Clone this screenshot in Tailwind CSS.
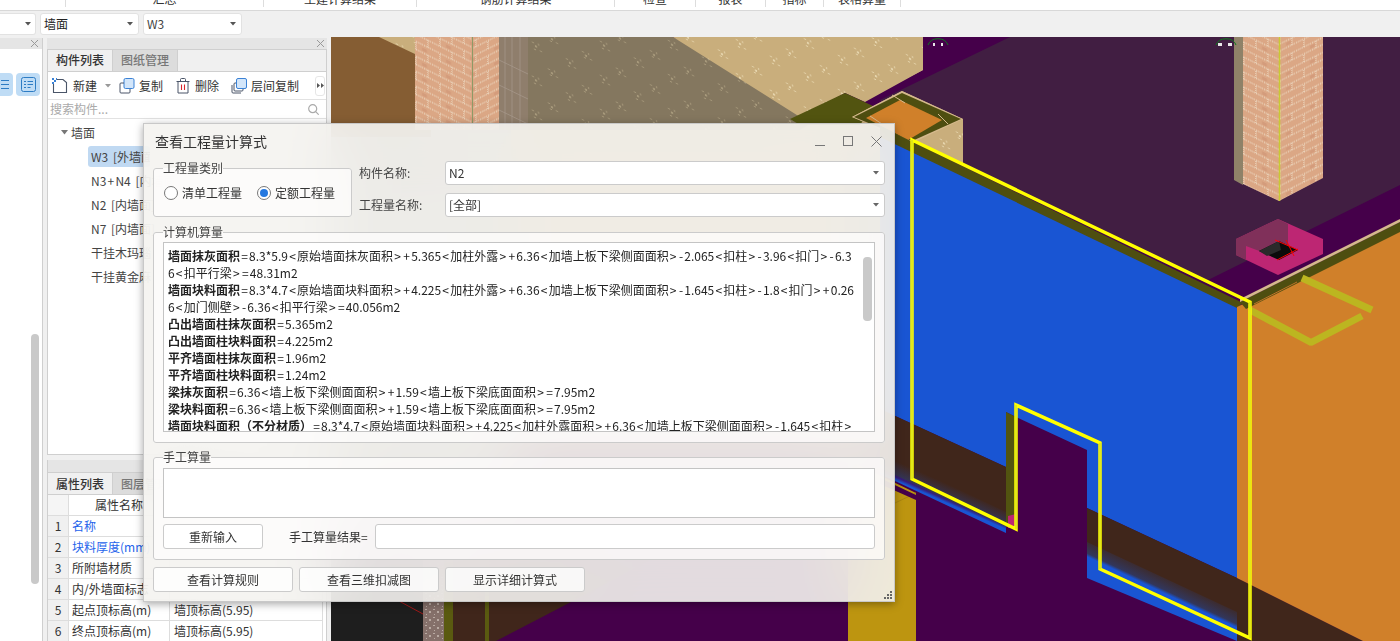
<!DOCTYPE html>
<html lang="zh-CN">
<head>
  <meta charset="UTF-8">
  <title>查看工程量计算式</title>
  <script src="https://cdn.jsdelivr.net/npm/@tailwindcss/browser@4"></script>
</head>
<body class="bg-[#f0f0f0]">
<div class="relative w-[1400px] h-[641px] overflow-hidden flex flex-col bg-[#f0f0f0] text-xs text-[#333] font-['Noto_Sans_CJK_SC','Liberation_Sans',sans-serif]">

  <!-- ribbon, only its bottom edge is on screen -->
  <div class="h-[11px] bg-white border-b border-[#d8d8d8] overflow-hidden">
    <div class="h-[7px] flex items-end leading-[14px] text-center whitespace-nowrap">
      <div class="w-[65px] h-[7px]"></div>
      <div class="w-[198px] h-[7px] border-l border-[#ddd] flex justify-center items-end"><span class="mb-[1px]">汇总</span></div>
      <div class="w-[153px] h-[7px] border-l border-[#ddd] flex justify-center items-end"><span class="mb-[1px]">土建计算结果</span></div>
      <div class="w-[198px] h-[7px] border-l border-[#ddd] flex justify-center items-end"><span class="mb-[1px]">钢筋计算结果</span></div>
      <div class="w-[81px] h-[7px] border-l border-[#ddd] flex justify-center items-end"><span class="mb-[1px]">检查</span></div>
      <div class="w-[70px] h-[7px] border-l border-[#ddd] flex justify-center items-end"><span class="mb-[1px]">报表</span></div>
      <div class="w-[58px] h-[7px] border-l border-[#ddd] flex justify-center items-end"><span class="mb-[1px]">指标</span></div>
      <div class="w-[78px] h-[7px] border-x border-[#ddd] flex justify-center items-end"><span class="mb-[1px]">表格算量</span></div>
    </div>
  </div>

  <!-- combos -->
  <div class="h-[26px] flex items-center gap-[4px] pb-[1px]">
    <div class="w-[36px] h-[22px] bg-white border border-[#e2e2e2] border-l-0 rounded-r-[3px] flex items-center justify-end pr-[4px]">
      <svg width="6" height="4"><path d="M0 0h6L3 3.5z" fill="#555"/></svg>
    </div>
    <div class="w-[99px] h-[22px] bg-white border border-[#e2e2e2] rounded-[3px] flex items-center justify-between pl-[3px] pr-[5px]">
      <span class="text-[#222]">墙面</span><svg width="6" height="4"><path d="M0 0h6L3 3.5z" fill="#555"/></svg>
    </div>
    <div class="w-[99px] h-[22px] bg-white border border-[#e2e2e2] rounded-[3px] flex items-center justify-between pl-[3px] pr-[5px]">
      <span class="text-[#444]">W3</span><svg width="6" height="4"><path d="M0 0h6L3 3.5z" fill="#555"/></svg>
    </div>
  </div>

  <div class="h-[604px] flex">
    <!-- narrow left panel -->
    <div class="w-[43px] mt-[1px] bg-white border-r border-[#cfcfcf] relative shrink-0">
      <div class="h-[11px] bg-[#e5e5e5] flex items-center justify-end pr-[4px]">
        <svg width="7" height="7" viewBox="0 0 7 7"><path d="M0 0l7 7M7 0L0 7" stroke="#999" fill="none"/></svg>
      </div>
      <div class="h-[23px] mt-[24px] flex justify-between pr-[2px]">
        <div class="w-[13px] rounded-r-[4px] bg-[#bfdcf5] flex items-center justify-end pr-[4px]">
          <svg width="8" height="11" viewBox="0 0 8 11"><path d="M0 1.5h8M0 5.5h8M0 9.5h8" stroke="#2d7cc4" fill="none"/></svg>
        </div>
        <div class="w-[24px] rounded-[4px] bg-[#bfdcf5] flex items-center justify-center">
          <svg width="15" height="15" viewBox="0 0 15 15"><rect x=".5" y=".5" width="14" height="14" rx="2" fill="none" stroke="#2d7cc4"/><path d="M3 4.500h2M6.500 4.500h5.500M3 7.500h2M6.500 7.500h5.500M3 10.500h2M6.500 10.500h3" stroke="#2d7cc4" fill="none"/></svg>
        </div>
      </div>
      <div class="absolute left-[31px] top-[296px] w-[8px] h-[250px] rounded-[4px] bg-[#c9c9c9]"></div>
    </div>

    <!-- component + property panels -->
    <div class="w-[280px] ml-[4px] mt-[1px] flex flex-col shrink-0">
      <div class="h-[417px] shrink-0 bg-white border border-t-0 border-[#cfcfcf] flex flex-col">
        <div class="h-[11px] bg-[#e5e5e5] flex items-center justify-end pr-[3px] -mx-px">
          <svg width="7" height="7" viewBox="0 0 7 7"><path d="M0 0l7 7M7 0L0 7" stroke="#999" fill="none"/></svg>
        </div>
        <div class="h-[23px] flex bg-[#f0f0f0] border-y border-[#cfcfcf]">
          <div class="w-[65px] border-r border-[#cfcfcf] flex items-center justify-center font-medium pb-[1px] text-[#333]">构件列表</div>
          <div class="w-[65px] border-r border-[#cfcfcf] bg-[#dcdcdc] flex items-center justify-center text-[#777] font-medium pb-[1px]">图纸管理</div>
        </div>
        <!-- toolbar -->
        <div class="h-[28px] flex items-center border-b border-[#e2e2e2] whitespace-nowrap pl-[4px]">
          <svg width="16" height="16" viewBox="0 0 16 16" class="shrink-0"><path d="M1.500 6v8.500h13V4.500L11 1.500H5" fill="none" stroke="#4a5568" stroke-width="1.100"/><path d="M0 0h2v2H0zM4 0h1v2H4zM2 2h2v2H2zM0 4h2v2H0z" fill="#3b82d6"/></svg>
          <span class="ml-[5px]">新建</span>
          <svg width="6" height="4" class="ml-[8px] shrink-0"><path d="M0 0h6L3 3.500z" fill="#999"/></svg>
          <svg width="16" height="16" viewBox="0 0 16 16" class="ml-[8px] shrink-0"><rect x="5" y=".5" width="10" height="10" rx="1.500" fill="#d3e6fa" stroke="#3b82d6"/><path d="M5 5H2a1 1 0 0 0-1 1v8a1 1 0 0 0 1 1h8a1 1 0 0 0 1-1v-3" fill="none" stroke="#4a5568"/></svg>
          <span class="ml-[4px]">复制</span>
          <svg width="14" height="16" viewBox="0 0 14 16" class="ml-[13px] shrink-0"><path d="M.5 3.500h13M4.500 3V1.500a1 1 0 0 1 1-1h3a1 1 0 0 1 1 1V3M2 3.500V15h10V3.500" fill="none" stroke="#4a5568"/><path d="M5.500 6.500v5.500M8.500 6.500v5.500" stroke="#d8262c" stroke-width="1.100"/></svg>
          <span class="ml-[5px]">删除</span>
          <svg width="16" height="16" viewBox="0 0 16 16" class="ml-[12px] shrink-0"><rect x="5.500" y=".5" width="10" height="10" rx="1.500" fill="#d3e6fa" stroke="#3b82d6"/><path d="M5 5H4a1 1 0 0 0-1 1v6a1 1 0 0 0 1 1h7a1 1 0 0 0 1-1v-1M1 7v7a1 1 0 0 0 1 1h8" fill="none" stroke="#4a5568"/></svg>
          <span class="ml-[4px]">层间复制</span>
          <div class="ml-[16px] w-[10px] h-[20px] border border-[#e6e6e6] rounded-[3px] flex items-center justify-center">
            <svg width="7" height="5" viewBox="0 0 7 5"><path d="M0 0l3 2.500L0 5zM4 0l3 2.500L4 5z" fill="#555"/></svg>
          </div>
        </div>
        <!-- search -->
        <div class="h-[19px] flex items-center justify-between border-b border-[#e2e2e2] pl-[2px] pr-[7px] text-[#aaa]">
          <span>搜索构件...</span>
          <svg width="11" height="11" viewBox="0 0 11 11"><circle cx="4.700" cy="4.700" r="4" fill="none" stroke="#aaa" stroke-width="1.200"/><path d="M7.700 7.700l3 3" stroke="#aaa" stroke-width="1.200"/></svg>
        </div>
        <!-- tree -->
        <div class="flex-1 text-[#444] [word-spacing:2px] [&_i]:not-italic [&_i]:px-[1.2px]">
          <div class="h-[27px] flex items-center pl-[13px]">
            <svg width="7" height="5" class="mr-[3px]"><path d="M0 0h7L3.500 4.500z" fill="#777"/></svg>
            <span>墙面</span>
          </div>
          <div class="ml-[40px] w-[62px] h-[21px] rounded-[3px] bg-[#c0d9f2] flex items-center pl-[3px] whitespace-pre overflow-hidden">W3 [外墙面]</div>
          <div class="ml-[43px] h-[24px] mt-[2px] block leading-[24px]">N3<i>+</i>N4 [内墙面]</div>
          <div class="ml-[43px] h-[24px] flex items-center">N2 [内墙面]</div>
          <div class="ml-[43px] h-[24px] flex items-center">N7 [内墙面]</div>
          <div class="ml-[43px] h-[24px] flex items-center">干挂木玛瑙</div>
          <div class="ml-[43px] h-[24px] flex items-center">干挂黄金麻</div>
        </div>
      </div>

      <div class="mt-[5px] flex-1 min-h-0 overflow-hidden bg-white border-x border-[#cfcfcf] flex flex-col">
        <div class="h-[12px] shrink-0 bg-[#e5e5e5] -mx-px"></div>
        <div class="h-[23px] shrink-0 flex bg-[#f0f0f0] border-y border-[#cfcfcf]">
          <div class="w-[65px] border-r border-[#cfcfcf] flex items-center justify-center font-medium">属性列表</div>
          <div class="w-[65px] border-r border-[#cfcfcf] bg-[#dcdcdc] flex items-center justify-center text-[#777] font-medium">图层管理</div>
        </div>
        <div class="grid grid-cols-[21px_101px_153px] auto-rows-[21px] shrink-0 whitespace-nowrap">
          <div class="border-r border-b border-[#ddd] bg-[#f5f5f5]"></div>
          <div class="border-r border-b border-[#ddd] flex items-center justify-center">属性名称</div>
          <div class="border-r border-b border-[#ddd]"></div>
          <div class="border-r border-b border-[#ddd] bg-[#f0f0f0] flex items-center justify-center">1</div>
          <div class="border-r border-b border-[#ddd] flex items-center pl-[3px] text-[#2563eb]">名称</div>
          <div class="border-r border-b border-[#ddd]"></div>
          <div class="border-r border-b border-[#ddd] bg-[#f0f0f0] flex items-center justify-center">2</div>
          <div class="border-r border-b border-[#ddd] flex items-center pl-[3px] text-[#2563eb] overflow-hidden">块料厚度(mm)</div>
          <div class="border-r border-b border-[#ddd]"></div>
          <div class="border-r border-b border-[#ddd] bg-[#f0f0f0] flex items-center justify-center">3</div>
          <div class="border-r border-b border-[#ddd] flex items-center pl-[3px]">所附墙材质</div>
          <div class="border-r border-b border-[#ddd]"></div>
          <div class="border-r border-b border-[#ddd] bg-[#f0f0f0] flex items-center justify-center">4</div>
          <div class="border-r border-b border-[#ddd] flex items-center pl-[3px] overflow-hidden">内/外墙面标志</div>
          <div class="border-r border-b border-[#ddd]"></div>
          <div class="border-r border-b border-[#ddd] bg-[#f0f0f0] flex items-center justify-center">5</div>
          <div class="border-r border-b border-[#ddd] flex items-center pl-[3px]">起点顶标高(m)</div>
          <div class="border-r border-b border-[#ddd] flex items-center pl-[4px]">墙顶标高(5.95)</div>
          <div class="border-r border-b border-[#ddd] bg-[#f0f0f0] flex items-center justify-center">6</div>
          <div class="border-r border-b border-[#ddd] flex items-center pl-[3px]">终点顶标高(m)</div>
          <div class="border-r border-b border-[#ddd] flex items-center pl-[4px]">墙顶标高(5.95)</div>
        </div>
      </div>
    </div>

    <!-- 3D view -->
    <div class="ml-[4px] w-[1069px] shrink-0">
      <svg class="block" width="1069" height="604" viewBox="331 37 1069 604">
        <defs>
          <pattern id="stucco" width="34" height="34" patternUnits="userSpaceOnUse" patternTransform="skewY(26)">
            <rect width="34" height="34" fill="#c9ae7c"/>
            <path d="M4 5h2v1H4zM7 7h2v2H7zM10 4h1v2h-1zM6 10h2v1H6zM12 9h2v1h-2zM22 20h2v1h-2zM25 22h2v2h-2zM28 19h1v2h-1zM24 26h2v1h-2zM30 25h2v1h-2z" fill="#e6d5ad"/>
          </pattern>
          <pattern id="stuccoDark" width="34" height="34" patternUnits="userSpaceOnUse" patternTransform="skewY(26)">
            <rect width="34" height="34" fill="#84775f"/>
            <path d="M4 5h2v1H4zM7 7h2v2H7zM10 4h1v2h-1zM6 10h2v1H6zM12 9h2v1h-2zM22 20h2v1h-2zM25 22h2v2h-2zM28 19h1v2h-1zM24 26h2v1h-2zM30 25h2v1h-2z" fill="#a89a7c"/>
          </pattern>
          <pattern id="brickL" width="24" height="15" patternUnits="userSpaceOnUse" patternTransform="skewY(26.500)">
            <rect width="24" height="15" fill="#dba785"/>
            <path d="M0 7h24M0 14h24M8 0v7M20 7v8" stroke="#f3ecd8" stroke-dasharray="1 1" fill="none"/>
            <path d="M14 2h5v3h-5z" fill="#cf9577" opacity=".6"/>
          </pattern>
          <pattern id="brickR" width="24" height="15" patternUnits="userSpaceOnUse" patternTransform="skewY(-26.500)">
            <rect width="24" height="15" fill="#dba785"/>
            <path d="M0 7h24M0 14h24M8 0v7M20 7v8" stroke="#f3ecd8" stroke-dasharray="1 1" fill="none"/>
            <path d="M14 9h5v3h-5z" fill="#cf9577" opacity=".6"/>
          </pattern>
          <pattern id="gravel" width="8" height="8" patternUnits="userSpaceOnUse">
            <rect width="8" height="8" fill="#85706a"/>
            <path d="M1 1h2v1H1zM5 3h2v2H5zM2 6h1v1H2z" fill="#b9aaa2"/>
          </pattern>
          <linearGradient id="fringeA" gradientUnits="userSpaceOnUse" x1="950" y1="485" x2="942" y2="503">
            <stop offset="0" stop-color="#1955d3" stop-opacity="0"/><stop offset=".75" stop-color="#1955d3" stop-opacity=".35"/><stop offset=".9" stop-color="#1955d3"/>
          </linearGradient>
          <linearGradient id="fringeB" gradientUnits="userSpaceOnUse" x1="1170" y1="575" x2="1161" y2="594">
            <stop offset="0" stop-color="#1955d3" stop-opacity="0"/><stop offset=".75" stop-color="#1955d3" stop-opacity=".35"/><stop offset=".9" stop-color="#1955d3"/>
          </linearGradient>
        </defs>

        <rect x="331" y="37" width="1069" height="604" fill="#45004a"/>
        <!-- floor slab -->
        <path d="M1010 37H1400V185L1208 280 905 135 880 100z" fill="#411e42"/>

        <!-- behind the dialog, only seen through its blur -->
        <rect x="331" y="110" width="549" height="330" fill="#c9ae7c"/>
        <rect x="331" y="110" width="180" height="400" fill="#a8a8a0"/>

        <!-- back wall left of the dialog -->
        <rect x="331" y="37" width="100" height="100" fill="#855d33"/>
        <path d="M379 37H415V54z" fill="url(#stucco)"/>
        <path d="M528 37H673L830 112 800 130H528z" fill="url(#stuccoDark)"/>
        <path d="M673 37H923V70L865 102 845 93 800 117z" fill="url(#stucco)"/>
        <path d="M415 37H473V130H415z" fill="url(#brickL)"/>
        <path d="M473 37H499V130H473z" fill="url(#brickR)"/>
        <path d="M472.500 37v93" stroke="#8d9a66"/>
        <path d="M499 37H528V130H499z" fill="#8f7e6c"/>
        <path d="M505 37v93M512 37v93M520 37v93M499 60l29 14M499 85l29 14M499 110l29 14" stroke="#a89a8c" stroke-width=".7"/>
        <!-- stucco corner top right of dialog -->
        <path d="M880 37H923V70L880 92z" fill="url(#stucco)"/>

        <!-- olive slab and small box -->
        <path d="M790 119L845 93 873 106 860 125 800 125z" fill="#525410"/>
        <path d="M902 91L963 119V164L912 140 852 117z" fill="url(#stucco)"/>
        <path d="M902 91L963 119 912 143 852 117z" fill="#d5b98d"/>
        <path d="M902 93L961 119 912 141 854 117z" fill="#4e4e10"/>
        <path d="M900 100L942 120 908 140 866 118z" fill="#d0802a"/>
        <path d="M892 95L905 103M938 114L948 124M882 124L870 116" stroke="#d5b98d"/>

        <!-- lower left, below the dialog -->
        <rect x="331" y="560" width="92" height="81" fill="#1e1e1e"/>
        <path d="M399 601L423 614" stroke="#a01818"/>
        <rect x="423" y="560" width="21" height="81" fill="url(#gravel)"/>
        <rect x="444" y="560" width="9" height="81" fill="#5a5a10"/>
        <path d="M453 560H650L573 601 496 641H453z" fill="#40261b"/>
        <rect x="485" y="560" width="4" height="81" fill="#5a5a10"/>
        <path d="M848 460L916 493V641H848z" fill="#bd9510"/>
        <path d="M895 503L916 493" stroke="#a9850f"/>
        <path d="M880 478L916 495V500L880 484z" fill="#45004a"/>

        <!-- wall -->
        <path d="M880 136L1237 307V578L1087 508V450L1016 417 1006 412V467L880 409z" fill="#1955d3"/>
        <path d="M880 409L1006 467V527L880 468z" fill="#40261b"/>
        <path d="M880 452L1006 512V533L880 474z" fill="url(#fringeA)"/>
        <path d="M1087 508L1237 578 1363 641H1238L1087 572z" fill="#40261b"/>
        <path d="M1087 542L1237 612V641L1087 578z" fill="url(#fringeB)"/>
        <path d="M1006 412L1016 417V527L1006 527z" fill="#525410"/>
        <path d="M1008 516L1016 514V528H1008z" fill="#bd2673"/>

        <!-- slab edge above wall -->
        <path d="M880 126L1243 303 1237 308 880 137z" fill="#4e4e10"/>

        <!-- right floor -->
        <path d="M1237 307L1400 228V641H1363L1237 578z" fill="#d0802a"/>
        <path d="M1240 302L1400 222V232L1246 309z" fill="#4e4e10"/>
        <path d="M1240 299L1400 219V222L1240 302z" fill="#d5b98d"/>
        <path d="M1302 278L1372 310M1250 310L1312 343M1362 316L1310 343" stroke="#bcb520" stroke-width="7" fill="none"/>
        <path d="M1297 282L1254 304" stroke="#c0752a" fill="none"/>

        <!-- column -->
        <path d="M1234 37H1243V185L1234 180z" fill="#8f8268"/>
        <path d="M1243 37H1279V201L1243 184z" fill="url(#brickL)"/>
        <path d="M1279 37H1323V178L1279 201z" fill="url(#brickR)"/>
        <path d="M1279.500 37V201" stroke="#c9c932" stroke-width="1.600"/>

        <!-- pink pit -->
        <path d="M1236 239L1278 219 1323 239V254L1278 275 1236 255z" fill="#bd2673"/>
        <path d="M1236 239L1278 219 1288 224V248L1278 258 1246 246V260L1236 255z" fill="#80305a"/>
        <path d="M1259 251L1279 241 1298 250 1279 260z" fill="#0b0b0b"/>
        <path d="M1259 251L1279 241 1281 250 1267 256z" fill="#2a2a2a"/>
        <path d="M1275 240L1298 250M1277 260L1298 249M1286 240L1294 256" stroke="#f00" fill="none"/>

        <!-- green marks -->
        <path d="M928 45a10.500 9 0 0 1 20 0M1216 45a10.500 9 0 0 1 20 0" stroke="#0f7a1f" fill="none"/>
        <path d="M933 43h2v3h-2zM941 43h2v3h-2zM1218 43h4v3h-4zM1228 43h4v3h-4z" fill="#e8e8e8"/>

        <!-- selected outline -->
        <path d="M912 140L1250 302V638L1100 569V443L1016 405V529L912 479z" fill="none" stroke="#ffff00" stroke-width="3.500" stroke-linejoin="miter"/>
        <path d="M912 140V479M1016 405V529M1100 443V569M1250 302V638" stroke="#b8c83c" stroke-width=".8" fill="none"/>
      </svg>
    </div>
  </div>

  <!-- dialog -->
  <div class="absolute left-[143px] top-[123px] w-[752px] h-[479px] bg-[#f4f3f0]/90 backdrop-blur-[32px] border border-[#c8c8c8] shadow-[0_2px_8px_rgba(0,0,0,0.35)] px-[9px] text-[#333]">
    <div class="h-[37px] flex items-center justify-between pl-[2px] pb-[3px]">
      <span class="text-sm text-[#333]">查看工程量计算式</span>
      <div class="flex items-center gap-[18px] pr-[3px]">
        <svg width="10" height="10" viewBox="0 0 10 10"><path d="M0 9.500h10" stroke="#777"/></svg>
        <svg width="10" height="10" viewBox="0 0 10 10"><rect x=".5" y=".5" width="9" height="9" fill="none" stroke="#777"/></svg>
        <svg width="11" height="11" viewBox="0 0 11 11"><path d="M.5.500l10 10M10.500.500l-10 10" stroke="#777" fill="none"/></svg>
      </div>
    </div>

    <div class="flex">
      <fieldset class="w-[199px] h-[56px] border border-[#cbcbcb] rounded-[3px] bg-white/70 pl-[9px]">
        <legend class="leading-[14px] text-[#444]">工程量类别</legend>
        <div class="flex items-center mt-[10px] pl-[1px] whitespace-nowrap">
          <span class="w-[14px] h-[14px] rounded-full border border-[#777] bg-white"></span>
          <span class="ml-[4px] w-[61px]">清单工程量</span>
          <span class="ml-[14px] w-[14px] h-[14px] rounded-full border border-[#777] bg-white flex items-center justify-center"><span class="w-[8px] h-[8px] rounded-full bg-[#2478e0]"></span></span>
          <span class="ml-[4px]">定额工程量</span>
        </div>
      </fieldset>
      <div class="ml-[7px] flex-1 flex flex-col gap-[8px]">
        <div class="flex items-center h-[24px]">
          <span class="w-[86px] text-[#444]">构件名称:</span>
          <div class="flex-1 h-[24px] bg-white border border-[#cbcbcb] rounded-[3px] flex items-center justify-between pl-[3px] pr-[5px]"><span>N2</span><svg width="6" height="4"><path d="M0 0h6L3 3.500z" fill="#666"/></svg></div>
        </div>
        <div class="flex items-center h-[24px]">
          <span class="w-[86px] text-[#444]">工程量名称:</span>
          <div class="flex-1 h-[24px] bg-white border border-[#cbcbcb] rounded-[3px] flex items-center justify-between pl-[3px] pr-[5px]"><span>[全部]</span><svg width="6" height="4"><path d="M0 0h6L3 3.500z" fill="#666"/></svg></div>
        </div>
      </div>
    </div>

    <fieldset class="mt-[8px] h-[218px] border border-[#cbcbcb] rounded-[3px] bg-white/70 px-[9px]">
      <legend class="leading-[14px] text-[#444]">计算机算量</legend>
      <div class="relative mt-[3px] w-[712px] h-[190px] bg-white border border-[#c4c4c4] overflow-hidden pl-[4px] pt-[4px] leading-[17px] text-[#222] whitespace-nowrap [&_i]:not-italic [&_i]:px-[1.2px]">
        <p><b class="font-bold">墙面抹灰面积</b><i>=</i>8.3*5.9<i>&lt;</i>原始墙面抹灰面积<i>&gt;</i><i>+</i>5.365<i>&lt;</i>加柱外露<i>&gt;</i><i>+</i>6.36<i>&lt;</i>加墙上板下梁侧面面积<i>&gt;</i><i>-</i>2.065<i>&lt;</i>扣柱<i>&gt;</i><i>-</i>3.96<i>&lt;</i>扣门<i>&gt;</i><i>-</i>6.3</p>
        <p>6<i>&lt;</i>扣平行梁<i>&gt;</i><i>=</i>48.31m2</p>
        <p><b class="font-bold">墙面块料面积</b><i>=</i>8.3*4.7<i>&lt;</i>原始墙面块料面积<i>&gt;</i><i>+</i>4.225<i>&lt;</i>加柱外露<i>&gt;</i><i>+</i>6.36<i>&lt;</i>加墙上板下梁侧面面积<i>&gt;</i><i>-</i>1.645<i>&lt;</i>扣柱<i>&gt;</i><i>-</i>1.8<i>&lt;</i>扣门<i>&gt;</i><i>+</i>0.26</p>
        <p>6<i>&lt;</i>加门侧壁<i>&gt;</i><i>-</i>6.36<i>&lt;</i>扣平行梁<i>&gt;</i><i>=</i>40.056m2</p>
        <p><b class="font-bold">凸出墙面柱抹灰面积</b><i>=</i>5.365m2</p>
        <p><b class="font-bold">凸出墙面柱块料面积</b><i>=</i>4.225m2</p>
        <p><b class="font-bold">平齐墙面柱抹灰面积</b><i>=</i>1.96m2</p>
        <p><b class="font-bold">平齐墙面柱块料面积</b><i>=</i>1.24m2</p>
        <p><b class="font-bold">梁抹灰面积</b><i>=</i>6.36<i>&lt;</i>墙上板下梁侧面面积<i>&gt;</i><i>+</i>1.59<i>&lt;</i>墙上板下梁底面面积<i>&gt;</i><i>=</i>7.95m2</p>
        <p><b class="font-bold">梁块料面积</b><i>=</i>6.36<i>&lt;</i>墙上板下梁侧面面积<i>&gt;</i><i>+</i>1.59<i>&lt;</i>墙上板下梁底面面积<i>&gt;</i><i>=</i>7.95m2</p>
        <p><b class="font-bold">墙面块料面积（不分材质）</b><i>=</i>8.3*4.7<i>&lt;</i>原始墙面块料面积<i>&gt;</i><i>+</i>4.225<i>&lt;</i>加柱外露面积<i>&gt;</i><i>+</i>6.36<i>&lt;</i>加墙上板下梁侧面面积<i>&gt;</i><i>-</i>1.645<i>&lt;</i>扣柱<i>&gt;</i></p>
        <div class="absolute left-[699px] top-[14px] w-[9px] h-[64px] rounded-[4px] bg-[#c9c9c9]"></div>
      </div>
    </fieldset>

    <fieldset class="mt-[7px] h-[110px] border border-[#cbcbcb] rounded-[3px] bg-white/70 px-[9px]">
      <legend class="leading-[14px] text-[#444]">手工算量</legend>
      <div class="mt-[4px] h-[50px] bg-white border border-[#c4c4c4]"></div>
      <div class="mt-[6px] flex items-center h-[25px]">
        <div class="w-[100px] h-[25px] bg-white border border-[#cbcbcb] rounded-[3px] flex items-center justify-center">重新输入</div>
        <span class="ml-[26px] w-[86px] whitespace-nowrap">手工算量结果=</span>
        <div class="flex-1 h-[25px] bg-white border border-[#cbcbcb] rounded-[3px]"></div>
      </div>
    </fieldset>

    <div class="mt-[7px] flex gap-[6px]">
      <div class="w-[140px] h-[25px] bg-white/80 border border-[#cbcbcb] rounded-[3px] flex items-center justify-center">查看计算规则</div>
      <div class="w-[140px] h-[25px] bg-white/80 border border-[#cbcbcb] rounded-[3px] flex items-center justify-center">查看三维扣减图</div>
      <div class="w-[140px] h-[25px] bg-white/80 border border-[#cbcbcb] rounded-[3px] flex items-center justify-center">显示详细计算式</div>
    </div>

    <svg class="absolute right-[2px] bottom-[2px]" width="8" height="8" viewBox="0 0 8 8"><path d="M6 0h2v2H6zM3 3h2v2H3zM6 3h2v2H6zM0 6h2v2H0zM3 6h2v2H3zM6 6h2v2H6z" fill="#666"/></svg>
  </div>
</div>
</body>
</html>
